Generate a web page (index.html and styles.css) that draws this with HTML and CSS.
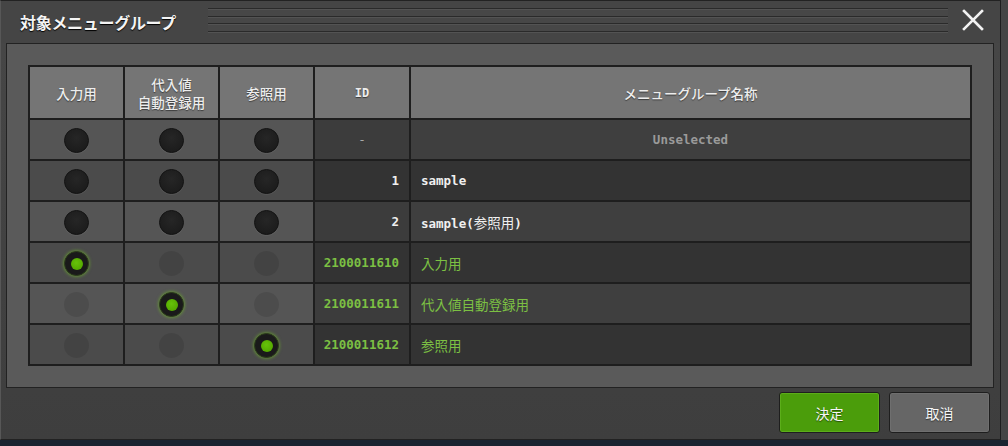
FILE: index.html
```html
<!DOCTYPE html>
<html lang="ja">
<head>
<meta charset="utf-8">
<title>対象メニューグループ</title>
<link rel="stylesheet" href="styles.css">
</head>
<body>
<div class="screen">
  <div class="dialog">
    <div class="titlebar">
      <div class="title">対象メニューグループ</div>
      <div class="grip"></div>
      <button class="close" aria-label="close">
        <svg width="24" height="24" viewBox="0 0 24 24"><path d="M3 3 L21 21 M21 3 L3 21" stroke="#f2f2f2" stroke-width="2.6" stroke-linecap="square" fill="none"/></svg>
      </button>
    </div>
    <div class="panel">
      <table class="grid">
        <thead>
          <tr>
            <th class="c-r">入力用</th>
            <th class="c-r">代入値<br>自動登録用</th>
            <th class="c-r">参照用</th>
            <th class="c-id mono">ID</th>
            <th class="c-name">メニューグループ名称</th>
          </tr>
        </thead>
        <tbody>
          <tr class="odd">
            <td><span class="radio"></span></td>
            <td><span class="radio"></span></td>
            <td><span class="radio"></span></td>
            <td class="id mono dash">-</td>
            <td class="name mono unsel">Unselected</td>
          </tr>
          <tr class="even">
            <td><span class="radio"></span></td>
            <td><span class="radio"></span></td>
            <td><span class="radio"></span></td>
            <td class="id mono">1</td>
            <td class="name mono">sample</td>
          </tr>
          <tr class="odd">
            <td><span class="radio"></span></td>
            <td><span class="radio"></span></td>
            <td><span class="radio"></span></td>
            <td class="id mono">2</td>
            <td class="name mono">sample(<span class="jp">参照用</span>)</td>
          </tr>
          <tr class="even">
            <td><span class="radio on"></span></td>
            <td><span class="radio off"></span></td>
            <td><span class="radio off"></span></td>
            <td class="id mono green">2100011610</td>
            <td class="name jp green">入力用</td>
          </tr>
          <tr class="odd">
            <td><span class="radio off"></span></td>
            <td><span class="radio on"></span></td>
            <td><span class="radio off"></span></td>
            <td class="id mono green">2100011611</td>
            <td class="name jp green">代入値自動登録用</td>
          </tr>
          <tr class="even">
            <td><span class="radio off"></span></td>
            <td><span class="radio off"></span></td>
            <td><span class="radio on"></span></td>
            <td class="id mono green">2100011612</td>
            <td class="name jp green">参照用</td>
          </tr>
        </tbody>
      </table>
    </div>
    <div class="footer">
      <button class="btn ok">決定</button>
      <button class="btn cancel">取消</button>
    </div>
  </div>
</div>
</body>
</html>
```
FILE: styles.css
```css
html, body {
  margin: 0;
  padding: 0;
  background: #1a2330;
  font-family: "Noto Sans CJK JP", "Noto Sans", sans-serif;
}
.screen {
  width: 1008px;
  height: 440px;
  background: #454545;
}
.dialog {
  width: 1001px;
  height: 440px;
  box-sizing: border-box;
  border-top: 1px solid #222;
  border-right: 1px solid #1e1e1e;
  border-left: 1px solid #575757;
  border-bottom: 1px solid #222;
  background: linear-gradient(#474747, #3e3e3e);
  display: flex;
  flex-direction: column;
}
.titlebar {
  height: 42px;
  display: flex;
  align-items: center;
  background: #454545;
}
.title {
  color: #f4f4f4;
  font-weight: bold;
  font-size: 16px;
  margin-left: 19px;
  width: 188px;
  text-shadow: 0 1px 1px #000;
  letter-spacing: -0.3px;
}
.grip {
  width: 740px;
  height: 25px;
  margin-top: -4px;
  background: repeating-linear-gradient(to bottom, #2a2a2a 0, #2a2a2a 1px, #535353 1px, #535353 2px, #474747 2px, #474747 7.6px);
}
.close {
  margin-left: 13px;
  margin-top: -4px;
  width: 24px;
  height: 24px;
  padding: 0;
  border: 0;
  background: none;
  display: flex;
}
.panel {
  margin: 0 6px 0 5px;
  height: 345px;
  box-sizing: border-box;
  border: 1px solid #222;
  background: #5a5a5a;
  padding: 21px 21px 0 21px;
}
.grid {
  width: 944px;
  border-collapse: collapse;
  table-layout: fixed;
}
.grid th, .grid td {
  border: 2px solid #1e1e1e;
  padding: 0;
}
.grid th {
  height: 51px;
  background: #757575;
  color: #ededed;
  font-size: 13.5px;
  font-weight: 500;
  line-height: 18px;
  text-shadow: 0 1px 1px rgba(0,0,0,0.5);
}
.grid th.mono {
  font-size: 12px;
  font-weight: bold;
}
.c-r { width: 93px; }
.c-id { width: 94px; }
.grid td {
  height: 39px;
  text-align: center;
}
.odd td { background: #555; }
.even td { background: #4b4b4b; }
.odd td.id { background: #3c3c3c; }
.even td.id { background: #333; }
.odd td.name { background: #3f3f3f; }
.even td.name { background: #333; }
.mono {
  font-family: "DejaVu Sans Mono", "Liberation Mono", monospace;
  font-weight: bold;
  font-size: 12.5px;
}
td.id {
  text-align: right;
  padding-right: 10px;
  color: #f0f0f0;
}
td.id.dash {
  text-align: center;
  padding-right: 0;
  color: #aaa;
  font-weight: normal;
}
td.name {
  text-align: left;
  padding-left: 10px;
  color: #f0f0f0;
}
td.name.unsel {
  text-align: center;
  padding-left: 0;
  color: #9a9a9a;
}
.jp {
  font-family: "Noto Sans CJK JP", sans-serif;
  font-weight: normal;
  font-size: 13.5px;
}
.green { color: #7cc043 !important; }
.radio {
  display: inline-block;
  vertical-align: middle;
  width: 25px;
  height: 25px;
  box-sizing: border-box;
  border-radius: 50%;
  background: radial-gradient(circle at 50% 40%, #262626 0, #1e1e1e 60%, #181818 100%);
  border: 1px solid #141414;
  box-shadow: 0 1px 1px rgba(255,255,255,0.06);
  position: relative;
}
.radio.off {
  background: rgba(0,0,0,0.1);
  border: 0;
  box-shadow: none;
}
.radio.on {
  background: #1a1a1a;
  box-shadow: 0 0 3px 1px rgba(110,180,40,0.55);
  border: 1px solid #2a3a1a;
}
.radio.on::after {
  content: "";
  position: absolute;
  left: 5.5px;
  top: 5.5px;
  width: 12px;
  height: 12px;
  border-radius: 50%;
  background: radial-gradient(circle at 45% 40%, #66c20a 0, #55aa00 70%, #4a9400 100%);
}
.footer {
  flex: 1;
  display: flex;
  justify-content: flex-end;
  align-items: flex-start;
  gap: 9px;
  padding: 4px 10px 0 0;
}
.btn {
  width: 101px;
  height: 41px;
  border-radius: 3px;
  border: 1px solid #1e1e1e;
  font-family: "Noto Sans CJK JP", sans-serif;
  font-size: 14px;
  color: #f6f6f6;
  text-shadow: 0 1px 1px rgba(0,0,0,0.5);
  padding: 0;
}
.ok {
  background: #4b9d0b;
  box-shadow: inset 0 0 0 1px #5cae1a;
}
.cancel {
  background: #666;
  box-shadow: inset 0 0 0 1px #6f6f6f;
}
```
